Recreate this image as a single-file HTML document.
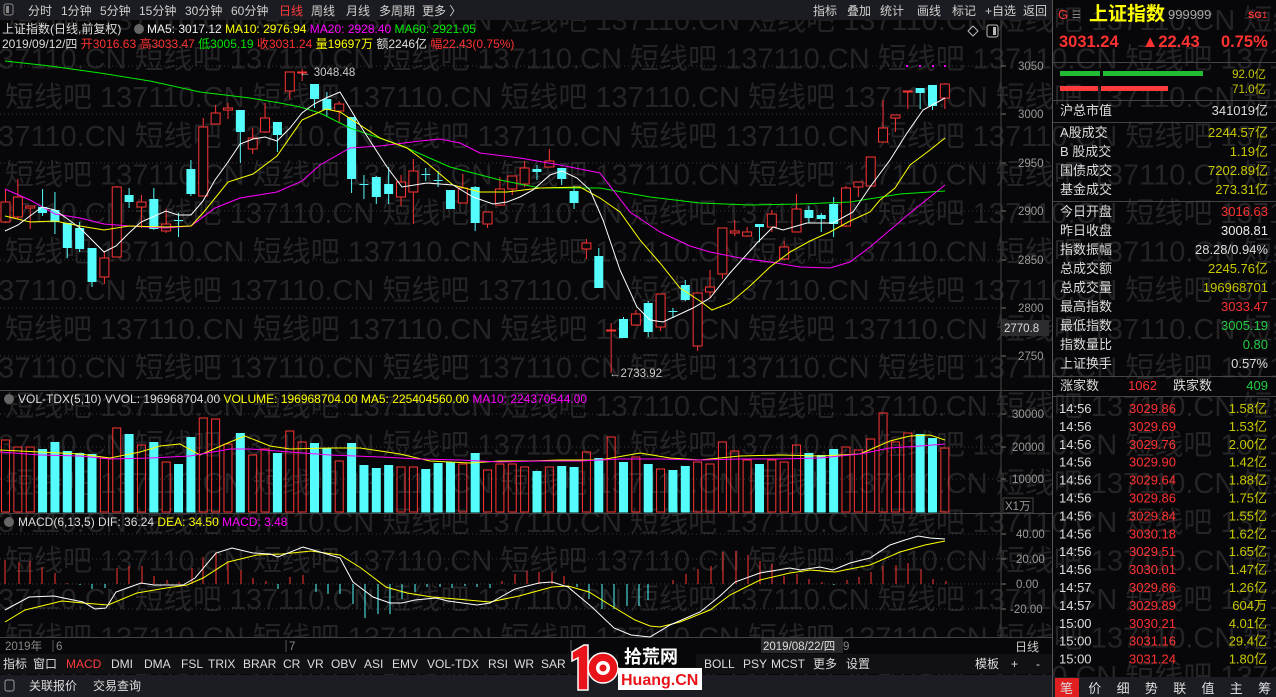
<!DOCTYPE html>
<html><head><meta charset="utf-8">
<style>
*{margin:0;padding:0;box-sizing:border-box}
html,body{width:1276px;height:697px;overflow:hidden}
body{background:#070709;font-family:"Liberation Sans","Noto Sans CJK SC",sans-serif;position:relative;color:#ccc}
svg{display:block;overflow:hidden}
</style></head><body>
<svg id="s" width="1276" height="697" style="position:absolute;left:0;top:0" font-family="Liberation Sans, Noto Sans CJK SC, sans-serif"></svg>
<script>
const S=document.getElementById('s');let h='';
h+='<rect x="0" y="0" width="1276" height="697" fill="#070709"/>';
for(let r=0;r<18;r++){let y=30+r*38.6;let off=(r%2)?-118:0;let t='';for(let k=0;k<6;k++)t+='短线吧 137110.CN ';h+=`<text x="${off+5}" y="${y}" font-size="29" fill="#242426">${t}</text>`;}
h+='<rect x="0" y="0" width="1053" height="20" fill="#1b1c21"/>';
h+='<rect x="4" y="4" width="9" height="11" rx="2" fill="none" stroke="#888"/><rect x="6" y="6" width="3" height="7" fill="#888"/>';
const tb=[['分时',28],['1分钟',61],['5分钟',100],['15分钟',139],['30分钟',185],['60分钟',231],['日线',279],['周线',311],['月线',346],['多周期',379],['更多 〉',422]];
tb.forEach(([t,x])=>h+=`<text x="${x}" y="15" font-size="12" fill="${t=='日线'?'#ff3b3b':'#d0d0d0'}">${t}</text>`);
[['指标',813],['叠加',847],['统计',880],['画线',917],['标记',952],['+自选',985],['返回',1023]].forEach(([t,x])=>h+=`<text x="${x}" y="15" font-size="12" fill="#d0d0d0">${t}</text>`);
h+='<text x="2" y="33" font-size="12" fill="#ddd">上证指数(日线,前复权)</text><circle cx="139" cy="29" r="5" fill="#666"/>';
h+='<text x="147" y="33" font-size="12"><tspan fill="#eee">MA5: 3017.12 </tspan><tspan fill="#ffff00">MA10: 2976.94 </tspan><tspan fill="#ff00ff">MA20: 2928.40 </tspan><tspan fill="#00ee00">MA60: 2921.05</tspan></text>';
h+='<text x="2" y="48" font-size="12"><tspan fill="#ddd">2019/09/12/四 </tspan><tspan fill="#ff3232">开3016.63 高3033.47 </tspan><tspan fill="#00e600">低3005.19 </tspan><tspan fill="#ff3232">收3031.24 </tspan><tspan fill="#ffff00">量19697万 </tspan><tspan fill="#ddd">额2246亿 </tspan><tspan fill="#ff3232">幅22.43(0.75%)</tspan></text>';
h+='<path d="M973 26 L978 31 L973 36 L968 31Z" fill="none" stroke="#bbb"/><rect x="987" y="25" width="11" height="12" rx="2" fill="none" stroke="#bbb"/><rect x="993" y="27" width="3" height="8" fill="#bbb"/>';
const grid=[[66,'3050'],[114,'3000'],[163,'2950'],[211,'2900'],[260,'2850'],[308,'2800'],[356,'2750']];
grid.forEach(([y,t])=>{h+=`<line x1="0" y1="${y}" x2="1000" y2="${y}" stroke="#3a3a3a" stroke-dasharray="1 3"/><line x1="1001" y1="${y}" x2="1006" y2="${y}" stroke="#777"/><text x="1018" y="${y+4}" font-size="11.5" fill="#9a9a9a">${t}</text>`});
[[414,'30000'],[447,'20000'],[479,'10000']].forEach(([y,t])=>{h+=`<line x1="0" y1="${y}" x2="1000" y2="${y}" stroke="#3a3a3a" stroke-dasharray="1 3"/><line x1="1001" y1="${y}" x2="1006" y2="${y}" stroke="#777"/><text x="1012" y="${y+4}" font-size="11.5" fill="#9a9a9a">${t}</text>`});
[[534,'40.00'],[559,'20.00'],[584,'0.00'],[609,'-20.00']].forEach(([y,t])=>{h+=`<line x1="0" y1="${y}" x2="1000" y2="${y}" stroke="#3a3a3a" stroke-dasharray="1 3"/><line x1="1001" y1="${y}" x2="1006" y2="${y}" stroke="#777"/><text x="${t.length>5?1010:1016}" y="${y+4}" font-size="11.5" fill="#9a9a9a">${t}</text>`});
h+='<rect x="1003" y="498" width="30" height="15" fill="none" stroke="#444"/><text x="1005" y="510" font-size="11.5" fill="#9a9a9a">X1万</text>';
h+='<rect x="1001" y="320" width="48" height="16" fill="#2c2c2e"/><text x="1004" y="332" font-size="11.5" fill="#ddd">2770.8</text>';
h+='<line x1="1001" y1="20" x2="1001" y2="652" stroke="#444"/><line x1="1052.5" y1="0" x2="1052.5" y2="697" stroke="#555"/>';
h+='<line x1="0" y1="390.5" x2="1052" y2="390.5" stroke="#444"/><line x1="0" y1="513.5" x2="1052" y2="513.5" stroke="#444"/><line x1="0" y1="637.5" x2="1052" y2="637.5" stroke="#444"/>';
const C=[[202,222,189,223,'r'],[197,217,179,219,'r'],[206,208,206,229,'r'],[207,213,189,216,'c'],[210,222,192,234,'c'],[223,248,223,258,'c'],[228,249,222,252,'c'],[248,282,248,287,'c'],[258,277,251,284,'r'],[187,257,186,257,'r'],[195,202,188,208,'c'],[202,207,195,228,'r'],[199,229,188,230,'c'],[224,231,209,233,'r'],[220,221,213,237,'c'],[169,194,160,196,'c'],[127,196,118,196,'r'],[113,124,105,124,'r'],[108,110,103,119,'r'],[110,132,110,163,'c'],[138,149,128,154,'r'],[118,132,103,133,'r'],[122,135,122,152,'c'],[72,91,72,99,'r'],[72,73,69,81,'r'],[84,99,84,108,'c'],[99,110,92,117,'c'],
[104,111,101,123,'r'],[117,179,117,193,'c'],[184,185,175,199,'c'],[177,197,176,204,'c'],[184,194,167,204,'c'],[182,197,175,206,'r'],[171,192,159,224,'r'],[174,175,168,181,'c'],[180,181,171,187,'c'],[190,209,190,209,'c'],[188,203,174,203,'r'],[187,223,186,231,'c'],[212,224,212,228,'r'],[189,205,177,206,'r'],[176,189,176,195,'r'],[168,184,161,187,'r'],[169,172,165,180,'c'],[161,167,149,167,'r'],[168,179,168,185,'c'],[191,203,186,209,'c'],[243,249,239,259,'r'],[256,288,248,288,'c'],[330,331,323,373,'r'],[319,338,317,338,'c'],[314,325,310,326,'r'],[303,332,301,337,'c'],
[294,327,294,331,'r'],[311,312,308,318,'c'],[285,300,280,301,'c'],[293,346,293,351,'r'],[287,292,270,298,'r'],[228,274,228,279,'r'],[231,233,220,236,'r'],[232,236,227,237,'r'],[224,227,224,242,'c'],[214,227,210,232,'r'],[247,259,241,260,'r'],[209,232,194,232,'r'],[210,218,206,223,'c'],[215,219,213,232,'c'],[204,224,197,237,'c'],[188,226,186,227,'r'],[182,187,182,197,'r'],[157,186,157,186,'r'],[128,142,100,142,'r'],[115,118,115,132,'r'],[91,92,91,109,'r'],[88,93,88,109,'c'],[85,106,85,110,'c'],[84,98,83,109,'r']];
const RED='#ff3434',CY='#54fcfc';const X=i=>5.5+12.36*i;
C.forEach((c,i)=>{const x=X(i);const col=c[4]=='r'?RED:CY;h+=`<line x1="${x}" y1="${c[2]}" x2="${x}" y2="${c[3]}" stroke="${col}"/>`;let bh=Math.max(c[1]-c[0],1);
if(c[4]=='r')h+=`<rect x="${x-4.5}" y="${c[0]}" width="9" height="${bh}" fill="#070709" stroke="${col}"/>`;else h+=`<rect x="${x-4.5}" y="${c[0]}" width="9" height="${bh}" fill="${col}"/>`;});
const pl=(pts,col)=>h+=`<polyline points="${pts.map(p=>p.join(',')).join(' ')}" fill="none" stroke="${col}" stroke-width="1"/>`;
pl([[5,61],[50,66],[100,73],[150,81],[200,92],[250,98],[280,103],[300,107],[320,113],[350,128],[400,145],[450,167],[500,180],[540,188],[600,188],[650,197],[700,203],[750,205],[800,204],[850,202],[900,194],[945,191]],'#00ee00');
pl([[5,189],[30,200],[55,214],[80,218],[104,224],[129,226],[166,228],[191,226],[215,208],[240,198],[277,192],[302,181],[320,165],[350,148],[380,146],[420,141],[440,139],[460,143],[480,153],[520,158],[560,165],[600,173],[630,212],[660,232],[690,246],[710,252],[740,258],[770,262],[800,267],[830,268],[850,262],[870,247],[890,230],[910,213],[930,197],[945,185]],'#ff00ff');
pl([[5,216],[30,222],[55,221],[80,226],[104,230],[129,226],[166,227],[191,226],[203,213],[228,182],[253,174],[277,156],[302,120],[326,109],[340,112],[380,138],[407,148],[427,163],[453,185],[480,192],[507,192],[540,188],[580,187],[600,198],[620,212],[640,240],[660,263],[680,288],[700,301],[712,310],[730,303],[750,286],[770,267],[790,252],[810,241],[830,232],[850,221],[870,212],[880,200],[895,188],[910,165],[930,150],[945,138]],'#ffff00');
pl([[5,231],[18,225],[42,207],[55,210],[80,228],[104,252],[116,246],[129,233],[141,222],[166,211],[178,215],[191,215],[203,201],[215,180],[228,162],[240,144],[253,139],[265,137],[277,141],[290,128],[302,113],[314,104],[326,98],[340,92],[363,130],[387,167],[402,187],[427,183],[453,185],[473,197],[493,204],[507,202],[520,197],[533,190],[550,175],[562,171],[577,178],[590,190],[603,220],[620,270],[637,307],[650,320],[663,322],[693,308],[710,298],[730,273],[757,243],[773,227],[783,230],[807,223],[833,223],[853,212],[870,187],[890,160],[907,133],[923,110],[945,98]],'#ffffff');
[907,920,933,945].forEach(x=>h+=`<rect x="${x-1}" y="65" width="2" height="2" fill="#ff00ff"/>`);
h+='<text x="299" y="76" font-size="11.5" fill="#ccc">← 3048.48</text><text x="609" y="377" font-size="11.5" fill="#ccc">←2733.92</text>';
h+='<circle cx="9" cy="399" r="5" fill="#666"/><text x="18" y="403" font-size="12"><tspan fill="#ddd">VOL-TDX(5,10) VVOL: 196968704.00 </tspan><tspan fill="#ffff00"> VOLUME: 196968704.00 MA5: 225404560.00 </tspan><tspan fill="#ff00ff">MA10: 224370544.00</tspan></text>';
const V=[440,447,447,449,442,451,453,454,458,428,434,445,442,462,464,437,418,419,444,433,455,449,453,431,442,443,448,461,443,465,468,465,467,467,469,463,462,464,453,470,464,464,467,471,467,466,467,452,458,437,462,457,464,469,470,466,462,464,442,451,460,464,460,462,445,453,455,449,447,450,439,413,442,433,434,438,448];
V.forEach((v,i)=>{const x=X(i);const r=C[i][4]=='r';h+=r?`<rect x="${x-4}" y="${v}" width="8" height="${512-v}" fill="none" stroke="${RED}"/>`:`<rect x="${x-4.5}" y="${v}" width="9" height="${512.5-v}" fill="${CY}"/>`;});
pl([[0,450],[40,452],[80,454],[110,458],[140,452],[160,446],[180,444],[200,455],[230,442],[245,436],[270,446],[290,449],[330,448],[360,448],[400,454],[430,461],[470,463],[500,461],[530,461],[560,460],[600,460],[640,453],[670,458],[700,460],[740,456],[780,455],[820,456],[860,454],[890,441],[910,436],[930,435],[945,440]],'#ffff00');
pl([[0,452],[40,455],[80,456],[110,459],[150,458],[190,456],[230,449],[250,449],[290,452],[330,455],[380,457],[420,459],[460,460],[500,462],[540,461],[580,461],[620,459],[660,459],[700,460],[740,459],[780,459],[820,458],[860,454],[890,448],[920,446],[945,444]],'#ff00ff');
h+='<circle cx="9" cy="522" r="5" fill="#666"/><text x="18" y="526" font-size="12"><tspan fill="#ddd">MACD(6,13,5) </tspan><tspan fill="#ddd">DIF: 36.24 </tspan><tspan fill="#ffff00">DEA: 34.50 </tspan><tspan fill="#ff00ff">MACD: 3.48</tspan></text>';
const M=[[5,24],[19,22],[30,23],[42,17],[55,11],[67,1],[80,-1],[92,-5],[105,-4],[117,16],[129,18],[142,18],[154,8],[167,4],[179,2],[192,16],[203,27],[216,31],[228,22],[241,14],[253,6],[266,3],[278,-5],[290,7],[303,9],[316,-8],[328,-10],[340,-10],[353,-20],[365,-34],[378,-30],[390,-30],[402,-15],[415,-8],[427,-3],[440,-3],[452,-4],[465,-2],[477,-3],[490,-4],[502,3],[515,10],[527,13],[539,12],[552,12],[564,8],[577,-3],[589,-15],[602,-25],[614,-25],[627,-22],[639,-22],[648,-16],[673,4],[686,10],[698,15],[711,18],[723,32],[736,33],[748,29],[760,23],[772,20],[784,8],[797,10],[809,5],[822,2],[834,-1],[847,4],[859,7],[871,12],[883,18],[896,19],[908,21],[921,15],[933,5],[946,3]];
M.forEach(([x,v])=>h+=`<line x1="${x}" y1="584" x2="${x}" y2="${584-v}" stroke="${v>0?RED:CY}"/>`);
pl([[5,622],[25,610],[62,601],[83,603],[108,605],[137,593],[166,588],[187,585],[203,578],[228,562],[257,555],[282,554],[311,551],[340,555],[361,568],[386,587],[407,593],[432,597],[456,599],[490,602],[519,596],[552,587],[568,586],[589,592],[610,605],[635,620],[650,626],[660,627],[680,622],[710,610],[730,595],[760,580],[790,573],[810,570],[835,572],[870,565],[900,552],[925,545],[945,541]],'#ffff00');
pl([[5,610],[29,597],[54,596],[83,602],[95,609],[106,608],[116,592],[141,583],[154,585],[183,585],[195,578],[216,553],[232,548],[253,553],[270,554],[278,557],[303,547],[320,552],[340,558],[353,582],[373,597],[390,603],[402,603],[415,600],[436,598],[448,601],[477,605],[490,603],[515,589],[539,583],[552,582],[568,587],[593,608],[614,628],[631,635],[650,637],[670,625],[700,612],[720,596],[735,582],[760,573],[790,568],[800,570],[820,567],[833,570],[850,563],[870,558],[890,545],[905,540],[918,536],[930,538],[945,539]],'#ffffff');
h+='<rect x="0" y="638" width="1052" height="15" fill="#070709"/>';
h+='<text x="5" y="650" font-size="11.5" fill="#888">2019年</text><line x1="53" y1="640" x2="53" y2="652" stroke="#555"/><text x="56" y="650" font-size="11.5" fill="#888">6</text>';
h+='<line x1="286" y1="640" x2="286" y2="652" stroke="#555"/><text x="289" y="650" font-size="11.5" fill="#888">7</text><line x1="571" y1="640" x2="571" y2="652" stroke="#555"/>';
h+='<rect x="761" y="638" width="82" height="15" fill="#2a2a2c"/><text x="763" y="650" font-size="11.5" fill="#ddd">2019/08/22/四</text><text x="843" y="650" font-size="11.5" fill="#888">9</text>';
h+='<text x="1015" y="651" font-size="12" fill="#ccc">日线</text>';
h+='<rect x="0" y="654" width="1052" height="20" fill="#111114"/>';
const bt=[['指标',3],['窗口',33],['MACD',66],['DMI',111],['DMA',144],['FSL',181],['TRIX',208],['BRAR',243],['CR',283],['VR',307],['OBV',331],['ASI',364],['EMV',392],['VOL-TDX',427],['RSI',488],['WR',514],['SAR',541],['BOLL',704],['PSY',743],['MCST',771],['更多',813],['设置',846],['模板',975],['+',1011],['-',1036]];
bt.forEach(([t,x])=>h+=`<text x="${x}" y="668" font-size="12" fill="${t=='MACD'?'#ff3b3b':'#ddd'}">${t}</text>`);
h+='<rect x="0" y="675" width="1052" height="22" fill="#1c1d22"/><rect x="5" y="680" width="9" height="11" rx="2" fill="none" stroke="#999"/><text x="29" y="690" font-size="12" fill="#ddd">关联报价</text><text x="93" y="690" font-size="12" fill="#ddd">交易查询</text>';
h+='<path d="M572 652 L584 645 L588 645 L588 690 L578 690 L578 658 L572 661Z" fill="#e8141a" stroke="#fff" stroke-width="1.5"/>';
h+='<circle cx="603" cy="668" r="15" fill="#e8141a" stroke="#fff" stroke-width="1.5"/><circle cx="603" cy="668" r="7" fill="#fff"/><circle cx="603" cy="668" r="3.5" fill="#e8141a"/>';
h+='<rect x="618" y="642" width="78" height="25" fill="#070709"/><text x="624" y="663" font-size="18" font-weight="bold" fill="#fff">拾荒网</text><rect x="618" y="668" width="84" height="22" fill="#fff"/><text x="621" y="685" font-size="16" font-weight="bold" fill="#e8141a">Huang.CN</text>';
const R=1053;
h+='<text x="1058" y="19" font-size="13" fill="#ff3b3b">G</text><text x="1072" y="18" font-size="10" fill="#888">☰</text><text x="1089" y="20" font-size="19" font-weight="bold" fill="#ffff00">上证指数</text><text x="1168" y="19" font-size="13" fill="#aaa">999999</text><text x="1248" y="18" font-size="9.5" font-weight="bold" fill="#ff3b3b">SG</text><text x="1262" y="18" font-size="9.5" fill="#ff3b3b">1</text>';
h+='<text x="1059" y="47" font-size="16.5" font-weight="bold" fill="#ff3232">3031.24</text><text x="1142" y="47" font-size="16.5" font-weight="bold" fill="#ff3232">▲22.43</text><text x="1221" y="47" font-size="16.5" font-weight="bold" fill="#ff3232">0.75%</text>';
const sep=y=>h+=`<line x1="${R}" y1="${y}" x2="1276" y2="${y}" stroke="#444"/>`;
[62.5,100.5,122.5,201.5,376.5,396.5].forEach(sep);
h+='<rect x="1060" y="71" width="40" height="5" fill="#22bb33"/><rect x="1103" y="71" width="100" height="5" fill="#22bb33"/><rect x="1060" y="86" width="38" height="5" fill="#ff3b3b"/><rect x="1101" y="86" width="67" height="5" fill="#ff3b3b"/>';
h+='<text x="1266" y="78" font-size="11.5" fill="#c8c800" text-anchor="end">92.0亿</text><text x="1266" y="93" font-size="11.5" fill="#c8c800" text-anchor="end">71.0亿</text>';
const rows=[['沪总市值','341019亿','#ddd',115],['A股成交','2244.57亿','#c8c800',137],[' B 股成交','1.19亿','#c8c800',156],['国债成交','7202.89亿','#c8c800',175],['基金成交','273.31亿','#c8c800',194],['今日开盘','3016.63','#ff3232',216],['昨日收盘','3008.81','#eee',235],['指数振幅','28.28/0.94%','#ddd',254],['总成交额','2245.76亿','#c8c800',273],['总成交量','196968701','#c8c800',292],['最高指数','3033.47','#ff3232',311],['最低指数','3005.19','#22cc44',330],['指数量比','0.80','#22cc44',349],['上证换手','0.57%','#ddd',368]];
rows.forEach(([a,b,c,y])=>h+=`<text x="1060" y="${y}" font-size="13" fill="#ddd">${a}</text><text x="1268" y="${y}" font-size="13" fill="${c}" text-anchor="end">${b}</text>`);
h+='<text x="1060" y="390" font-size="13" fill="#ddd">涨家数</text><text x="1157" y="390" font-size="13" fill="#ff3232" text-anchor="end">1062</text><text x="1173" y="390" font-size="13" fill="#ddd">跌家数</text><text x="1268" y="390" font-size="13" fill="#22cc44" text-anchor="end">409</text>';
const tk=[['14:56','3029.86','1.58亿'],['14:56','3029.69','1.53亿'],['14:56','3029.76','2.00亿'],['14:56','3029.90','1.42亿'],['14:56','3029.64','1.88亿'],['14:56','3029.86','1.75亿'],['14:56','3029.84','1.55亿'],['14:56','3030.18','1.62亿'],['14:56','3029.51','1.65亿'],['14:56','3030.01','1.47亿'],['14:57','3029.86','1.26亿'],['14:57','3029.89','604万'],['15:00','3030.21','4.01亿'],['15:00','3031.16','29.4亿'],['15:00','3031.24','1.80亿']];
tk.forEach(([a,b,c],i)=>{const y=413+i*17.9;h+=`<text x="1059" y="${y}" font-size="13" fill="#ddd">${a}</text><text x="1129" y="${y}" font-size="13" fill="#ff3232">${b}</text><text x="1267" y="${y}" font-size="13" fill="#c8c800" text-anchor="end">${c}</text>`});
h+='<rect x="1053" y="677" width="223" height="20" fill="#1c1d22"/><rect x="1055" y="678" width="24" height="19" fill="#e02020"/>';
['笔','价','细','势','联','值','主','筹'].forEach((t,i)=>h+=`<text x="${1060+i*28.3}" y="693" font-size="13" fill="#ddd">${t}</text>`);
S.innerHTML=h;
</script>
</body></html>
